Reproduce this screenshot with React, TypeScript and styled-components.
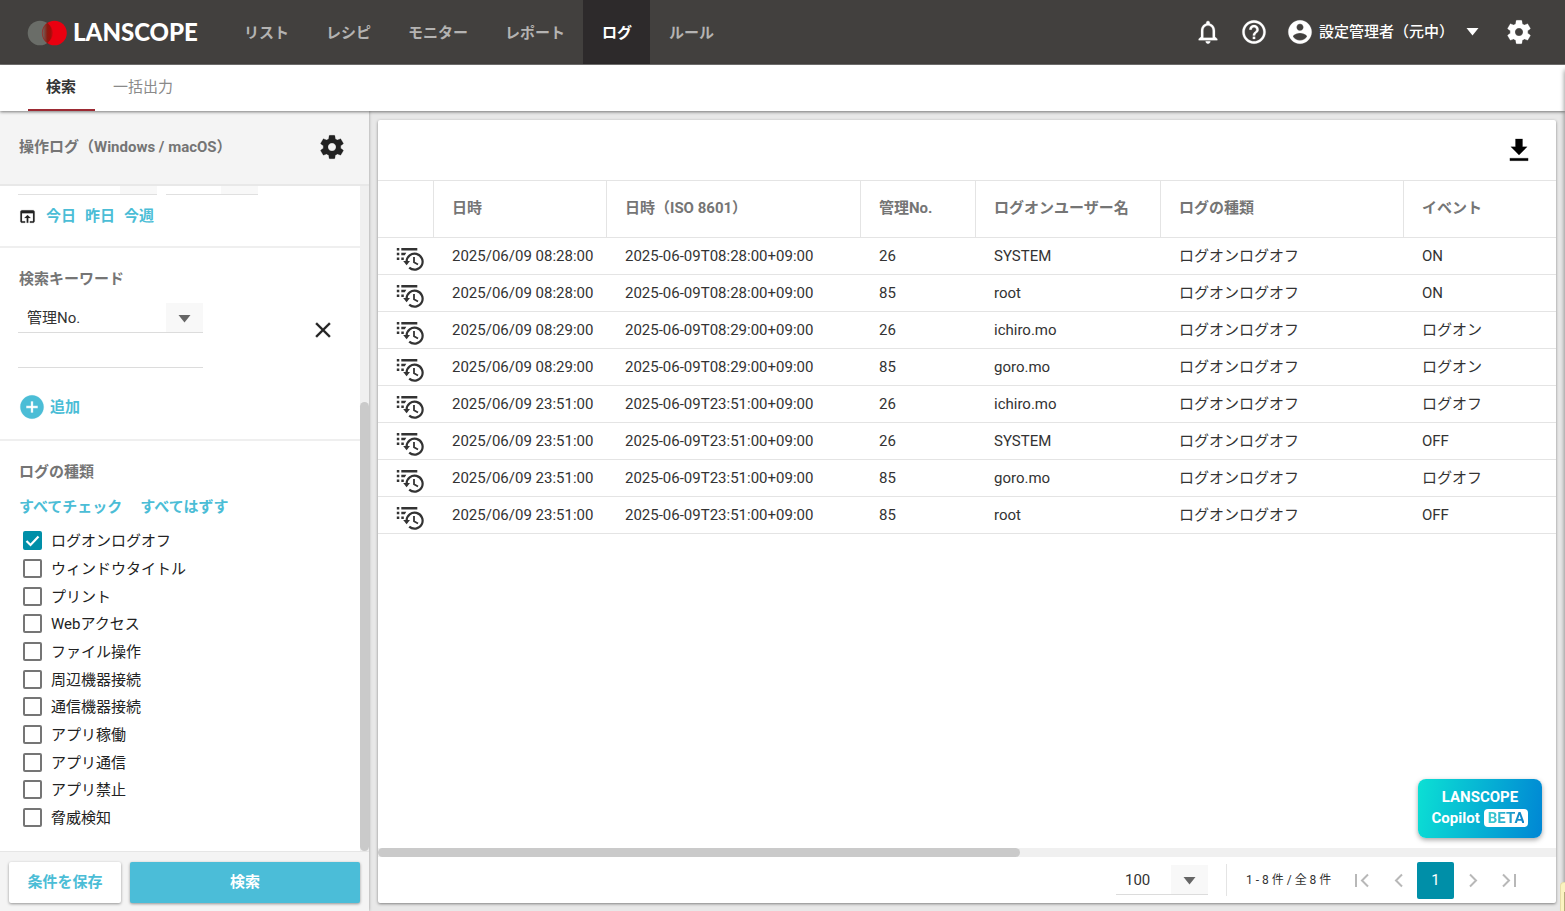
import React, { useId, useState } from "react";
import styled, { createGlobalStyle } from "styled-components";

const GlobalStyle = createGlobalStyle`
  *, *::before, *::after { box-sizing: border-box; }
  body {
    margin: 0;
    background: #e8e8e8;
    color: #333;
    font: 400 15px/20px Roboto, "Noto Sans CJK JP", sans-serif;
  }
  button, input, select { font: inherit; color: inherit; }
  button { border: 0; padding: 0; background: none; cursor: pointer; }
  a { color: inherit; text-decoration: none; }
`;

const Page = styled.div`
  display: flex;
  flex-direction: column;
  height: 100vh;
  overflow: hidden;
  position: relative;
`;

/* ---------- header ---------- */

const Header = styled.header`
  display: flex;
  align-items: stretch;
  height: 65px;
  flex: none;
  background: #42403e;
  box-shadow: inset 0 -1px 0 #777674;
  color: #fff;
`;

const Brand = styled.a`
  display: flex;
  align-items: center;
  width: 225px;
  padding-left: 27px;
`;

const MainNav = styled.nav`
  display: flex;
  flex: 1;
`;

const NavLink = styled.a<{ $active?: boolean }>`
  display: flex;
  align-items: center;
  margin-bottom: 1px;
  padding: 1px 18px 0 19px;
  font-weight: 700;
  color: ${(p) => (p.$active ? "#fff" : "#b4b3b2")};
  background: ${(p) => (p.$active ? "#2d2a2b" : "transparent")};
`;

const HeaderTools = styled.div`
  display: flex;
  align-items: center;
  padding: 0 32px 1px 0;
`;

const ToolButton = styled.button<{ $gap?: number }>`
  display: flex;
  align-items: center;
  margin-left: ${(p) => p.$gap ?? 18}px;
  font-weight: 500;
`;

const UserName = styled.span`
  margin: 0 12px 0 5px;
`;

/* ---------- second level tabs ---------- */

const SubNav = styled.nav`
  display: flex;
  flex: none;
  height: 46px;
  padding-left: 28px;
  background: #fff;
  box-shadow: 0 1px 3px rgba(0, 0, 0, 0.5);
  position: relative;
`;

const SubTab = styled.a<{ $active?: boolean }>`
  padding: 12px 19px 0 18px;
  border-bottom: 2px solid ${(p) => (p.$active ? "#9c2a33" : "transparent")};
  font-weight: ${(p) => (p.$active ? 700 : 400)};
  color: ${(p) => (p.$active ? "#333" : "#8a8a8a")};
`;

/* ---------- body ---------- */

const Body = styled.div`
  display: flex;
  flex: 1;
  min-height: 0;
`;

const Sidebar = styled.aside`
  display: flex;
  flex-direction: column;
  flex: none;
  width: 369px;
  background: #f4f4f4;
  box-shadow: 0 0 3px rgba(0, 0, 0, 0.35);
`;

const SidebarHead = styled.div`
  display: flex;
  align-items: center;
  justify-content: space-between;
  flex: none;
  height: 75px;
  padding: 0 23px 1px 18px;
  border-bottom: 2px solid #e8e8e8;
`;

const Heading = styled.h2`
  margin: 0;
  padding-left: 1px;
  font-size: 15px;
  line-height: 20px;
  font-weight: 700;
  color: #757575;
`;

const ScrollArea = styled.div`
  display: flex;
  flex: 1;
  min-height: 0;
`;

const Conditions = styled.div`
  flex: 1;
  min-width: 0;
  overflow: hidden;
  background: #fff;
`;

const VTrack = styled.div`
  display: flex;
  flex-direction: column;
  width: 9px;
  background: #f0f0f0;
`;

const VThumb = styled.div`
  flex: 449;
  border-radius: 5px;
  background: #cacaca;
`;

const TrackSpace = styled.div<{ $part: number }>`
  flex: ${(p) => p.$part};
`;

const Section = styled.section<{ $top: number; $bottom: number }>`
  padding: ${(p) => p.$top}px 18px ${(p) => p.$bottom}px;
  border-bottom: 2px solid #efefef;
  &:last-child { border-bottom: 0; }
`;

const FieldTails = styled.div`
  display: flex;
  gap: 9px;
  height: 9px;
  margin-bottom: 11px;
`;

const FieldTail = styled.div<{ $width: number }>`
  display: flex;
  justify-content: flex-end;
  width: ${(p) => p.$width}px;
  border-bottom: 1px solid #e0e0e0;
  &::after {
    content: "";
    width: 37px;
    background: #f8f8f8;
  }
`;

const QuickRow = styled.div`
  display: flex;
  align-items: center;
  gap: 9px;
`;

const TextButton = styled.button`
  color: #4bbdd6;
  font-weight: 700;
`;

const KeywordRow = styled.div`
  display: flex;
  align-items: flex-start;
  justify-content: space-between;
  padding-right: 6px;
  margin-top: 14px;
`;

const KeywordFields = styled.div`
  width: 185px;
`;

const RemoveButton = styled(ToolButton)`
  margin-top: 14px;
`;

const SelectBox = styled.div<{ $width: number }>`
  display: flex;
  position: relative;
  width: ${(p) => p.$width}px;
  height: 30px;
  border-bottom: 1px solid #dcdcdc;
  background: linear-gradient(#f8f8f8, #f8f8f8) right / 37px 100% no-repeat;
  select {
    appearance: none;
    width: 100%;
    border: 0;
    padding: 1px 40px 0 9px;
    background: transparent;
    outline: none;
  }
  svg {
    position: absolute;
    right: 12px;
    top: 12px;
    pointer-events: none;
  }
`;

const KeywordInput = styled.input`
  display: block;
  width: 100%;
  height: 35px;
  border: 0;
  border-bottom: 1px solid #dcdcdc;
  padding: 0 9px;
  background: transparent;
  outline: none;
`;

const AddButton = styled.button`
  display: flex;
  align-items: center;
  gap: 4px;
  margin-top: 25px;
  color: #4bbdd6;
  font-weight: 700;
`;

const CheckActions = styled.div`
  display: flex;
  gap: 18px;
  margin: 15px 0 10px 1px;
`;

const CheckList = styled.ul`
  list-style: none;
  margin: 0;
  padding: 0;
`;

const CheckItem = styled.li`
  height: 28px;
  margin-bottom: -1px;
  &:nth-child(3n + 1) { margin-bottom: 0; }
  &:nth-child(3n + 2) { margin-bottom: 0; }
`;

const CheckLabel = styled.label`
  display: flex;
  align-items: center;
  gap: 9px;
  height: 28px;
  padding-left: 5px;
  color: #222;
`;

const Checkbox = styled.input`
  appearance: none;
  flex: none;
  width: 19px;
  height: 19px;
  margin: 0 0 2px;
  border: 2px solid #757575;
  border-radius: 2px;
  &:checked {
    border-color: #008fa8;
    background: #008fa8 url("data:image/svg+xml,%3Csvg xmlns='http://www.w3.org/2000/svg' viewBox='0 0 15 15'%3E%3Cpath d='M1.5 8l4 4L13.500 3.500' fill='none' stroke='white' stroke-width='2.200'/%3E%3C/svg%3E") center / 15px 15px no-repeat;
  }
`;

const SidebarFoot = styled.div`
  display: flex;
  gap: 9px;
  flex: none;
  height: 60px;
  padding: 10px 9px 8px;
  border-top: 1px solid #e6e6e6;
`;

const ActionButton = styled.button<{ $primary?: boolean }>`
  flex: ${(p) => (p.$primary ? "1" : "0 0 112px")};
  padding-bottom: 2px;
  border-radius: 2px;
  background: ${(p) => (p.$primary ? "#4bbdd8" : "#fff")};
  color: ${(p) => (p.$primary ? "#fff" : "#4bbdd6")};
  font-weight: 700;
  box-shadow: 0 1px 3px rgba(0, 0, 0, 0.4);
`;

/* ---------- results ---------- */

const Results = styled.main`
  display: flex;
  flex-direction: column;
  flex: 1;
  min-width: 0;
  margin: 9px 9px 8px;
  border-radius: 2px;
  background: #fff;
  box-shadow: 0 1px 3px rgba(0, 0, 0, 0.45);
`;

const ResultsBar = styled.div`
  display: flex;
  align-items: center;
  justify-content: flex-end;
  flex: none;
  height: 61px;
  padding-right: 23px;
  border-bottom: 1px solid #e4e4e4;
`;

const TableArea = styled.div`
  flex: 1;
  min-height: 0;
  overflow: hidden;
`;

const LogTable = styled.table`
  width: 100%;
  table-layout: fixed;
  border-collapse: separate;
  border-spacing: 0;
`;

const Th = styled.th`
  height: 57px;
  padding: 0 0 2px 18px;
  border-right: 1px solid #e4e4e4;
  border-bottom: 1px solid #e4e4e4;
  text-align: left;
  font-weight: 700;
  color: #757575;
  white-space: nowrap;
  &:last-child { border-right: 0; }
`;

const Td = styled.td`
  height: 37px;
  padding: 0 0 0 18px;
  border-bottom: 1px solid #e4e4e4;
  white-space: nowrap;
`;

const RowButton = styled.button`
  display: flex;
  padding-top: 8px;
`;

const HTrack = styled.div`
  display: flex;
  flex: none;
  height: 9px;
  background: #f0f0f0;
`;

const HThumb = styled.div`
  flex: 642;
  border-radius: 5px;
  background: #cacaca;
`;

const Pager = styled.div`
  display: flex;
  align-items: center;
  justify-content: flex-end;
  flex: none;
  height: 46px;
  padding-right: 28px;
`;

const Count = styled.span`
  min-width: 108px;
  margin-left: 18px;
  padding-left: 19px;
  border-left: 1px solid #e4e4e4;
  font-size: 12px;
  line-height: 32px;
  color: #333;
`;

const PageButton = styled.button<{ $current?: boolean }>`
  display: flex;
  align-items: center;
  justify-content: center;
  width: 37px;
  height: 37px;
  border-radius: 2px;
  background: ${(p) => (p.$current ? "#008fa8" : "transparent")};
  color: ${(p) => (p.$current ? "#fff" : "#b8b8b8")};
`;

const PageButtons = styled.div`
  display: flex;
  margin-left: 9px;
`;

/* ---------- floating parts ---------- */

const Copilot = styled.button`
  position: absolute;
  right: 23px;
  bottom: 73px;
  width: 124px;
  height: 59px;
  padding-bottom: 1px;
  border-radius: 8px;
  background: linear-gradient(100deg, #0ce0d4, #0086d4);
  box-shadow: 0 2px 5px rgba(0, 0, 0, 0.35);
  color: #fff;
  font-weight: 700;
  line-height: 21px;
`;

const Beta = styled.span`
  display: inline-block;
  margin-left: 4px;
  padding: 0 4px;
  border-radius: 4px;
  background: #fff;
  line-height: 18px;
  span {
    background: linear-gradient(90deg, #3fd0d0, #0c80c8);
    background-clip: text;
    color: transparent;
  }
`;

const EdgeShade = styled.div`
  position: absolute;
  top: 70px;
  right: -4px;
  bottom: 0;
  width: 4px;
  box-shadow: 0 0 5px rgba(0, 0, 0, 0.55);
`;

const EdgeNote = styled.div`
  position: absolute;
  right: 0;
  bottom: 0;
  width: 5px;
  height: 29px;
  border: 1px solid #e6dda8;
  border-width: 1px 0 0 1px;
  border-radius: 4px 0 0 0;
  background: linear-gradient(#b5ad7c, #b5ad7c) right bottom / 1px 19px no-repeat #fbf3c0;
`;

/* ---------- icons ---------- */

const COG =
  "M19.43 12.98c.04-.32.07-.64.07-.98s-.03-.66-.07-.98l2.11-1.650c.19-.15.24-.42.12-.64l-2-3.460c-.12-.22-.39-.3-.61-.22l-2.490 1c-.52-.4-1.080-.73-1.690-.98l-.38-2.650C14.460 2.180 14.250 2 14 2h-4c-.25 0-.46.18-.49.42l-.38 2.650c-.61.25-1.170.59-1.690.98l-2.490-1c-.23-.09-.49 0-.61.22l-2 3.460c-.13.22-.07.49.12.64l2.110 1.650c-.04.32-.07.65-.07.98s.03.66.07.98l-2.110 1.650c-.19.15-.24.42-.12.64l2 3.460c.12.22.39.3.61.22l2.490-1c.52.4 1.080.73 1.690.98l.38 2.650c.03.24.24.42.49.42h4c.25 0 .46-.18.49-.42l.38-2.650c.61-.25 1.170-.59 1.690-.98l2.490 1c.23.09.49 0 .61-.22l2-3.460c.12-.22.07-.49-.12-.64l-2.110-1.650zM12 15.500c-1.930 0-3.500-1.570-3.500-3.500s1.570-3.500 3.500-3.500 3.500 1.570 3.500 3.500-1.570 3.500-3.500 3.500z";
const BELL =
  "M12 22c1.100 0 2-.9 2-2h-4c0 1.100.9 2 2 2zm6-6v-5c0-3.070-1.630-5.640-4.500-6.320V4c0-.83-.67-1.500-1.500-1.500s-1.500.67-1.500 1.500v.68C7.640 5.360 6 7.920 6 11v5l-2 2v1h16v-1l-2-2zm-2 1H8v-6c0-2.480 1.510-4.500 4-4.500s4 2.020 4 4.500v6z";
const HELP =
  "M11 18h2v-2h-2v2zm1-16C6.480 2 2 6.480 2 12s4.480 10 10 10 10-4.480 10-10S17.520 2 12 2zm0 18c-4.410 0-8-3.590-8-8s3.590-8 8-8 8 3.590 8 8-3.590 8-8 8zm0-14c-2.210 0-4 1.790-4 4h2c0-1.100.9-2 2-2s2 .9 2 2c0 2-3 1.750-3 5h2c0-2.250 3-2.500 3-5 0-2.210-1.790-4-4-4z";
const ACCOUNT =
  "M12 2C6.480 2 2 6.480 2 12s4.480 10 10 10 10-4.480 10-10S17.520 2 12 2zm0 3c1.660 0 3 1.340 3 3s-1.340 3-3 3-3-1.340-3-3 1.340-3 3-3zm0 14.200c-2.500 0-4.710-1.280-6-3.220.03-1.990 4-3.080 6-3.080 1.990 0 5.970 1.090 6 3.080-1.290 1.940-3.500 3.220-6 3.220z";
const OPEN =
  "M19 4H5c-1.110 0-2 .9-2 2v12c0 1.100.89 2 2 2h4v-2H5V8h14v10h-4v2h4c1.100 0 2-.9 2-2V6c0-1.100-.89-2-2-2zm-7 6l-4 4h3v6h2v-6h3l-4-4z";
const DOWNLOAD = "M19 9.300h-4V2.500H9v6.800H5l7 7zM4.200 19v2.200h15.600V19z";
const CLOSE =
  "M19 6.410L17.590 5 12 10.590 6.410 5 5 6.410 10.590 12 5 17.590 6.410 19 12 13.410 17.590 19 19 17.590 13.410 12z";
const PLUS =
  "M12 2C6.480 2 2 6.480 2 12s4.480 10 10 10 10-4.480 10-10S17.520 2 12 2zm5 11h-4v4h-2v-4H7v-2h4V7h2v4h4v2z";

function Glyph({ d, size, color = "currentColor" }: { d: string; size: number; color?: string }) {
  return (
    <svg width={size} height={size} viewBox="0 0 24 24" fill={color} aria-hidden="true">
      <path d={d} stroke={color} strokeWidth="0.2" />
    </svg>
  );
}

function Caret({ color, width = 13 }: { color: string; width?: number }) {
  return (
    <svg width={width} height="8" viewBox="0 0 13 8" fill={color} aria-hidden="true">
      <path d="M0.500 0h12L6.500 7.500z" />
    </svg>
  );
}

function Logo() {
  const id = useId();
  return (
    <svg width="190" height="40" viewBox="0 -6 190 40" role="img" aria-label="LANSCOPE">
      <defs>
        <linearGradient id={id} x1="0" x2="1" y1="0" y2="0">
          <stop offset="0" stopColor="#6a6d68" />
          <stop offset="0.5" stopColor="#8c1a10" />
          <stop offset="0.8" stopColor="#9c0f0a" />
          <stop offset="1" stopColor="#c80810" />
        </linearGradient>
      </defs>
      <circle cx="13" cy="14" r="12.300" fill="#6a6d68" />
      <circle cx="27.500" cy="14" r="12.300" fill="#ea0010" />
      <path d="M20.250 4.100a12.300 12.300 0 0 1 0 19.800a12.300 12.300 0 0 1 0 -19.800z" fill={`url(#${id})`} stroke="#8c1a10" strokeWidth="0.8" strokeOpacity="0.5" />
      <text x="46" y="22" fill="#fff" fontFamily="Lato, sans-serif" fontWeight="900" fontSize="24">
        LANSCOPE
      </text>
    </svg>
  );
}

function HistoryIcon() {
  return (
    <svg width="28" height="24" viewBox="0 0 28 24" fill="#333" aria-hidden="true">
      <path d="M0.800 0h2.500v2.400h-2.500zM5.300 0h16v2.400h-16zM0.800 4.800h2.500v2.400h-2.500zM5.300 4.800h5l-1.500 2.400h-3.500zM0.800 9.600h2.500v2.400h-2.500zM5.300 9.600h2.500v2.400H5.300z" />
      <path d="M10.600 13.700A8 8 0 1 1 13.200 19.600" fill="none" stroke="#333" strokeWidth="2.200" />
      <path d="M7.200 13h6.800l-3.400 4.200z" />
      <path d="M18 9v5.200l4 2.300" fill="none" stroke="#333" strokeWidth="1.800" />
    </svg>
  );
}

function Arrow({ kind }: { kind: "first" | "prev" | "next" | "last" }) {
  const d = {
    first: "M2 2v13M14 2.500L8 8.500l6 6",
    prev: "M11 2.500L5 8.500l6 6",
    next: "M5 2.500l6 6-6 6",
    last: "M1 2.500l6 6-6 6M13 2v13",
  }[kind];
  return (
    <svg width="16" height="17" viewBox="0 0 16 17" fill="none" stroke="currentColor" strokeWidth="2" aria-hidden="true">
      <path d={d} />
    </svg>
  );
}

/* ---------- data ---------- */

const NAV = ["リスト", "レシピ", "モニター", "レポート", "ログ", "ルール"];

const KINDS = [
  "ログオンログオフ",
  "ウィンドウタイトル",
  "プリント",
  "Webアクセス",
  "ファイル操作",
  "周辺機器接続",
  "通信機器接続",
  "アプリ稼働",
  "アプリ通信",
  "アプリ禁止",
  "脅威検知",
];

const COLUMNS: { label: string; width?: number }[] = [
  { label: "", width: 56 },
  { label: "日時", width: 173 },
  { label: "日時（ISO 8601）", width: 254 },
  { label: "管理No.", width: 115 },
  { label: "ログオンユーザー名", width: 185 },
  { label: "ログの種類", width: 243 },
  { label: "イベント" },
];

const LOGS = [
  ["08:28:00", "26", "SYSTEM", "ON"],
  ["08:28:00", "85", "root", "ON"],
  ["08:29:00", "26", "ichiro.mo", "ログオン"],
  ["08:29:00", "85", "goro.mo", "ログオン"],
  ["23:51:00", "26", "ichiro.mo", "ログオフ"],
  ["23:51:00", "26", "SYSTEM", "OFF"],
  ["23:51:00", "85", "goro.mo", "ログオフ"],
  ["23:51:00", "85", "root", "OFF"],
];

export default function App() {
  const [checked, setChecked] = useState<string[]>([KINDS[0]]);
  const toggle = (kind: string) =>
    setChecked((now) => (now.includes(kind) ? now.filter((k) => k !== kind) : [...now, kind]));

  return (
    <Page>
      <GlobalStyle />
      <Header>
        <Brand href="#">
          <Logo />
        </Brand>
        <MainNav>
          {NAV.map((name) => (
            <NavLink key={name} href="#" $active={name === "ログ"}>
              {name}
            </NavLink>
          ))}
        </MainNav>
        <HeaderTools>
          <ToolButton aria-label="通知">
            <Glyph d={BELL} size={28} />
          </ToolButton>
          <ToolButton aria-label="ヘルプ">
            <Glyph d={HELP} size={28} />
          </ToolButton>
          <ToolButton>
            <Glyph d={ACCOUNT} size={28} />
            <UserName>設定管理者（元中）</UserName>
            <Caret color="#fff" />
          </ToolButton>
          <ToolButton aria-label="設定" $gap={26}>
            <Glyph d={COG} size={28} />
          </ToolButton>
        </HeaderTools>
      </Header>

      <SubNav>
        <SubTab href="#" $active>
          検索
        </SubTab>
        <SubTab href="#">一括出力</SubTab>
      </SubNav>

      <Body>
        <Sidebar>
          <SidebarHead>
            <Heading>操作ログ（Windows / macOS）</Heading>
            <ToolButton aria-label="ログ設定">
              <Glyph d={COG} size={28} color="#222" />
            </ToolButton>
          </SidebarHead>

          <ScrollArea>
            <Conditions>
              <Section $top={0} $bottom={20}>
                <FieldTails>
                  <FieldTail $width={139} />
                  <FieldTail $width={92} />
                </FieldTails>
                <QuickRow>
                  <Glyph d={OPEN} size={19} color="#222" />
                  <TextButton>今日</TextButton>
                  <TextButton>昨日</TextButton>
                  <TextButton>今週</TextButton>
                </QuickRow>
              </Section>

              <Section $top={21} $bottom={18}>
                <Heading>検索キーワード</Heading>
                <KeywordRow>
                  <KeywordFields>
                    <SelectBox $width={185}>
                      <select aria-label="検索項目">
                        <option>管理No.</option>
                      </select>
                      <Caret color="#666" />
                    </SelectBox>
                    <KeywordInput aria-label="検索キーワード" />
                  </KeywordFields>
                  <RemoveButton aria-label="条件を削除">
                    <Glyph d={CLOSE} size={26} color="#222" />
                  </RemoveButton>
                </KeywordRow>
                <AddButton>
                  <Glyph d={PLUS} size={28} />
                  追加
                </AddButton>
              </Section>

              <Section $top={21} $bottom={0}>
                <Heading>ログの種類</Heading>
                <CheckActions>
                  <TextButton onClick={() => setChecked(KINDS)}>すべてチェック</TextButton>
                  <TextButton onClick={() => setChecked([])}>すべてはずす</TextButton>
                </CheckActions>
                <CheckList>
                  {KINDS.map((kind) => (
                    <CheckItem key={kind}>
                      <CheckLabel>
                        <Checkbox type="checkbox" checked={checked.includes(kind)} onChange={() => toggle(kind)} />
                        {kind}
                      </CheckLabel>
                    </CheckItem>
                  ))}
                </CheckList>
              </Section>
            </Conditions>
            <VTrack>
              <TrackSpace $part={216} />
              <VThumb />
            </VTrack>
          </ScrollArea>

          <SidebarFoot>
            <ActionButton>条件を保存</ActionButton>
            <ActionButton $primary>検索</ActionButton>
          </SidebarFoot>
        </Sidebar>

        <Results>
          <ResultsBar>
            <ToolButton aria-label="ダウンロード">
              <Glyph d={DOWNLOAD} size={28} color="#000" />
            </ToolButton>
          </ResultsBar>
          <TableArea>
            <LogTable>
              <colgroup>
                {COLUMNS.map((c) => (
                  <col key={c.label} width={c.width} />
                ))}
              </colgroup>
              <thead>
                <tr>
                  {COLUMNS.map((c) => (
                    <Th key={c.label}>{c.label}</Th>
                  ))}
                </tr>
              </thead>
              <tbody>
                {LOGS.map(([time, no, user, event], i) => (
                  <tr key={i}>
                    <Td>
                      <RowButton aria-label="前後のログ">
                        <HistoryIcon />
                      </RowButton>
                    </Td>
                    <Td>2025/06/09 {time}</Td>
                    <Td>2025-06-09T{time}+09:00</Td>
                    <Td>{no}</Td>
                    <Td>{user}</Td>
                    <Td>ログオンログオフ</Td>
                    <Td>{event}</Td>
                  </tr>
                ))}
              </tbody>
            </LogTable>
          </TableArea>
          <HTrack>
            <HThumb />
            <TrackSpace $part={536} />
          </HTrack>
          <Pager>
            <SelectBox $width={92}>
              <select aria-label="表示件数">
                <option>100</option>
              </select>
              <Caret color="#666" />
            </SelectBox>
            <Count>1 - 8 件 / 全 8 件</Count>
            <PageButtons>
              <PageButton aria-label="最初のページ">
                <Arrow kind="first" />
              </PageButton>
              <PageButton aria-label="前のページ">
                <Arrow kind="prev" />
              </PageButton>
              <PageButton $current>1</PageButton>
              <PageButton aria-label="次のページ">
                <Arrow kind="next" />
              </PageButton>
              <PageButton aria-label="最後のページ">
                <Arrow kind="last" />
              </PageButton>
            </PageButtons>
          </Pager>
        </Results>
      </Body>

      <Copilot>
        LANSCOPE
        <br />
        Copilot
        <Beta>
          <span>BETA</span>
        </Beta>
      </Copilot>
      <EdgeShade />
      <EdgeNote />
    </Page>
  );
}
